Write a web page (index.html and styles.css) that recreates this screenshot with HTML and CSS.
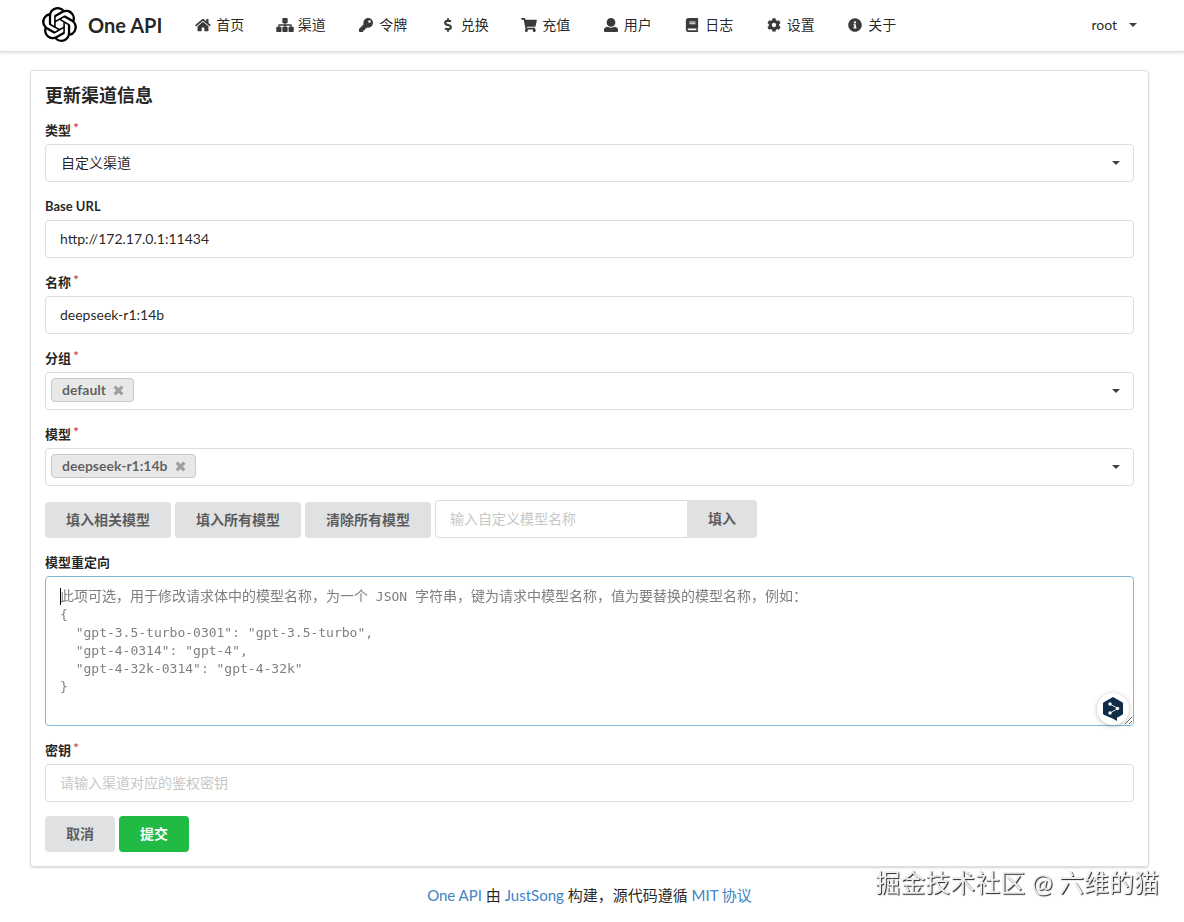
FILE: index.html
```html
<!DOCTYPE html>
<html lang="zh-CN">

<head>
    <meta charset="UTF-8">
    <meta name="viewport" content="width=device-width, initial-scale=1.0">
    <title>One API</title>
    <link rel="stylesheet" href="styles.css">
</head>

<body>
    <header class="header">
        <a class="brand" href="#">
            <svg class="logo" viewBox="0 0 24 24"><path d="M22.2819 9.8211a5.9847 5.9847 0 0 0-.5157-4.9108 6.0462 6.0462 0 0 0-6.5098-2.9A6.0651 6.0651 0 0 0 4.9807 4.1818a5.9847 5.9847 0 0 0-3.9977 2.9 6.0462 6.0462 0 0 0 .7427 7.0966 5.98 5.98 0 0 0 .511 4.9107 6.051 6.051 0 0 0 6.5146 2.9001A5.9847 5.9847 0 0 0 13.2599 24a6.0557 6.0557 0 0 0 5.7718-4.2058 5.9894 5.9894 0 0 0 3.9977-2.9001 6.0557 6.0557 0 0 0-.7475-7.0729zm-9.022 12.6081a4.4755 4.4755 0 0 1-2.8764-1.0408l.1419-.0804 4.7783-2.7582a.7948.7948 0 0 0 .3927-.6813v-6.7369l2.02 1.1686a.071.071 0 0 1 .038.052v5.5826a4.504 4.504 0 0 1-4.4945 4.4944zm-9.6607-4.1254a4.4708 4.4708 0 0 1-.5346-3.0137l.142.0852 4.783 2.7582a.7712.7712 0 0 0 .7806 0l5.8428-3.3685v2.3324a.0804.0804 0 0 1-.0332.0615L9.74 19.9502a4.4992 4.4992 0 0 1-6.1408-1.6464zM2.3408 7.8956a4.485 4.485 0 0 1 2.3655-1.9728V11.6a.7664.7664 0 0 0 .3879.6765l5.8144 3.3543-2.0201 1.1685a.0757.0757 0 0 1-.071 0l-4.8303-2.7865A4.504 4.504 0 0 1 2.3408 7.872zm16.5963 3.8558L13.1038 8.364 15.1192 7.2a.0757.0757 0 0 1 .071 0l4.8303 2.7913a4.4944 4.4944 0 0 1-.6765 8.1042v-5.6772a.79.79 0 0 0-.407-.667zm2.0107-3.0231l-.142-.0852-4.7735-2.7818a.7759.7759 0 0 0-.7854 0L9.409 9.2297V6.8974a.0662.0662 0 0 1 .0284-.0615l4.8303-2.7866a4.4992 4.4992 0 0 1 6.6802 4.66zM8.3065 12.863l-2.02-1.1638a.0804.0804 0 0 1-.038-.0567V6.0742a4.4992 4.4992 0 0 1 7.3757-3.4537l-.142.0805L8.704 5.459a.7948.7948 0 0 0-.3927.6813zm1.0976-2.3654l2.602-1.4998 2.6069 1.4998v2.9994l-2.5974 1.4997-2.6067-1.4997Z"/></svg>
            <span>One API</span>
        </a>
        <nav class="nav">
            <a href="#"><svg class="icon" viewBox="0 0 576 512"><path d="M488 312.7V456c0 13.3-10.7 24-24 24H348c-6.6 0-12-5.4-12-12V356c0-6.6-5.4-12-12-12h-72c-6.6 0-12 5.4-12 12v112c0 6.6-5.4 12-12 12H112c-13.3 0-24-10.7-24-24V312.7c0-3.6 1.6-7 4.4-9.3l188-154.8c4.4-3.6 10.8-3.6 15.3 0l188 154.8c2.7 2.3 4.3 5.7 4.3 9.3zm83.6-60.9L488 182.9V44.4c0-6.6-5.4-12-12-12h-56c-6.6 0-12 5.4-12 12V117l-89.5-73.7c-17.7-14.6-43.3-14.6-61 0L4.4 251.8c-5.1 4.2-5.8 11.8-1.6 16.9l25.5 31c4.2 5.1 11.8 5.8 16.9 1.6l235.2-193.7c4.4-3.6 10.8-3.6 15.3 0l235.2 193.7c5.1 4.2 12.7 3.5 16.9-1.6l25.5-31c4.2-5.2 3.4-12.7-1.7-16.9z"/></svg>首页</a>
            <a href="#"><svg class="icon" viewBox="0 0 640 512"><path d="M616 320h-48v-48c0-22.056-17.944-40-40-40H344v-40h48c13.255 0 24-10.745 24-24V24c0-13.255-10.745-24-24-24H248c-13.255 0-24 10.745-24 24v144c0 13.255 10.745 24 24 24h48v40H112c-22.056 0-40 17.944-40 40v48H24c-13.255 0-24 10.745-24 24v144c0 13.255 10.745 24 24 24h144c13.255 0 24-10.745 24-24V344c0-13.255-10.745-24-24-24h-48v-40h176v40h-48c-13.255 0-24 10.745-24 24v144c0 13.255 10.745 24 24 24h144c13.255 0 24-10.745 24-24V344c0-13.255-10.745-24-24-24h-48v-40h176v40h-48c-13.255 0-24 10.745-24 24v144c0 13.255 10.745 24 24 24h144c13.255 0 24-10.745 24-24V344c0-13.255-10.745-24-24-24z"/></svg>渠道</a>
            <a href="#"><svg class="icon" viewBox="0 0 512 512"><path d="M512 176.001C512 273.203 433.202 352 336 352c-11.22 0-22.19-1.062-32.827-3.069l-24.012 27.014A23.999 23.999 0 0 1 261.223 384H224v40c0 13.255-10.745 24-24 24h-40v40c0 13.255-10.745 24-24 24H24c-13.255 0-24-10.745-24-24v-78.059c0-6.365 2.529-12.47 7.029-16.971l161.802-161.802C163.108 213.814 160 195.271 160 176 160 78.798 238.797.001 335.999 0 433.488-.001 512 78.511 512 176.001zM336 128c0 26.51 21.49 48 48 48s48-21.49 48-48-21.49-48-48-48-48 21.49-48 48z"/></svg>令牌</a>
            <a href="#"><svg class="icon" viewBox="0 0 288 512"><path d="M209.2 233.4l-108-31.6C88.7 198.2 80 186.5 80 173.5c0-16.3 13.2-29.5 29.5-29.5h66.3c12.2 0 24.2 3.7 34.2 10.5 6.1 4.1 14.3 3.1 19.5-2l34.8-34c7.1-6.9 6.1-18.4-1.8-24.5C238 74.8 207.4 64.1 176 64V16c0-8.8-7.2-16-16-16h-32c-8.8 0-16 7.2-16 16v48h-2.5C45.8 64-5.4 118.7.5 183.6c4.2 46.1 39.4 83.6 83.8 96.6l102.5 30c12.5 3.7 21.2 15.3 21.2 28.3 0 16.3-13.2 29.5-29.5 29.5h-66.3C100 368 88 364.3 78 357.5c-6.1-4.1-14.3-3.1-19.5 2l-34.8 34c-7.1 6.9-6.1 18.4 1.8 24.5 24.5 19.2 55.1 29.9 86.5 30v48c0 8.8 7.2 16 16 16h32c8.8 0 16-7.2 16-16v-48.2c46.6-.9 90.3-28.6 105.7-72.7 21.5-61.6-14.6-124.8-72.5-141.7z"/></svg>兑换</a>
            <a href="#"><svg class="icon" viewBox="0 0 576 512"><path d="M528.12 301.319l47.273-208C578.806 78.301 567.391 64 551.99 64H159.208l-9.166-44.81C147.758 8.021 137.93 0 126.529 0H24C10.745 0 0 10.745 0 24v16c0 13.255 10.745 24 24 24h69.883l70.248 343.435C147.325 417.1 136 435.222 136 456c0 30.928 25.072 56 56 56s56-25.072 56-56c0-15.674-6.447-29.835-16.824-40h209.647C430.447 426.165 424 440.326 424 456c0 30.928 25.072 56 56 56s56-25.072 56-56c0-22.172-12.888-41.332-31.579-50.405l5.517-24.276c3.413-15.018-8.002-29.319-23.403-29.319H218.117l-6.545-32h293.145c11.206 0 20.92-7.754 23.403-18.681z"/></svg>充值</a>
            <a href="#"><svg class="icon" viewBox="0 0 512 512"><path d="M256 0c88.366 0 160 71.634 160 160s-71.634 160-160 160S96 248.366 96 160 167.634 0 256 0zm183.283 333.821l-71.313-17.828c-74.923 53.89-165.738 41.864-223.94 0l-71.313 17.828C29.981 344.505 0 382.903 0 426.955V464c0 26.51 21.49 48 48 48h416c26.51 0 48-21.49 48-48v-37.045c0-44.052-29.981-82.45-72.717-93.134z"/></svg>用户</a>
            <a href="#"><svg class="icon" viewBox="0 0 448 512"><path d="M448 360V24c0-13.3-10.7-24-24-24H96C43 0 0 43 0 96v320c0 53 43 96 96 96h328c13.3 0 24-10.7 24-24v-16c0-7.5-3.5-14.3-8.9-18.7-4.2-15.4-4.2-59.3 0-74.7 5.4-4.3 8.9-11.1 8.9-18.6zM128 134c0-3.3 2.7-6 6-6h212c3.3 0 6 2.7 6 6v20c0 3.3-2.7 6-6 6H134c-3.3 0-6-2.7-6-6v-20zm0 64c0-3.3 2.7-6 6-6h212c3.3 0 6 2.7 6 6v20c0 3.3-2.7 6-6 6H134c-3.3 0-6-2.7-6-6v-20zm253.4 250H96c-17.7 0-32-14.3-32-32 0-17.6 14.4-32 32-32h285.4c-1.9 17.1-1.9 46.9 0 64z"/></svg>日志</a>
            <a href="#"><svg class="icon" viewBox="0 0 512 512"><path d="M487.4 315.7l-42.6-24.6c4.3-23.2 4.3-47 0-70.2l42.6-24.6c4.9-2.8 7.1-8.6 5.5-14-11.1-35.6-30-67.8-54.7-94.6-3.8-4.1-10-5.1-14.8-2.3L380.8 110c-17.9-15.4-38.5-27.3-60.8-35.1V25.8c0-5.6-3.9-10.5-9.4-11.7-36.7-8.2-74.3-7.8-109.2 0-5.5 1.2-9.4 6.1-9.4 11.7V75c-22.2 7.9-42.8 19.8-60.8 35.1L88.7 85.5c-4.9-2.8-11-1.9-14.8 2.3-24.7 26.7-43.6 58.9-54.7 94.6-1.7 5.4.6 11.2 5.5 14L67.3 221c-4.3 23.2-4.3 47 0 70.2l-42.6 24.6c-4.9 2.8-7.1 8.6-5.5 14 11.1 35.6 30 67.8 54.7 94.6 3.8 4.1 10 5.1 14.8 2.3l42.6-24.6c17.9 15.4 38.5 27.3 60.8 35.1v49.2c0 5.6 3.9 10.5 9.4 11.7 36.7 8.2 74.3 7.8 109.2 0 5.5-1.2 9.4-6.1 9.4-11.7v-49.2c22.2-7.9 42.8-19.8 60.8-35.1l42.6 24.6c4.9 2.8 11 1.9 14.8-2.3 24.7-26.7 43.6-58.9 54.7-94.6 1.5-5.5-.7-11.3-5.6-14.1zM256 336c-44.1 0-80-35.9-80-80s35.9-80 80-80 80 35.9 80 80-35.9 80-80 80z"/></svg>设置</a>
            <a href="#"><svg class="icon" viewBox="0 0 512 512"><path d="M256 8C119.043 8 8 119.083 8 256c0 136.997 111.043 248 248 248s248-111.003 248-248C504 119.083 392.957 8 256 8zm0 110c23.196 0 42 18.804 42 42s-18.804 42-42 42-42-18.804-42-42 18.804-42 42-42zm56 254c0 6.627-5.373 12-12 12h-88c-6.627 0-12-5.373-12-12v-24c0-6.627 5.373-12 12-12h12v-64h-12c-6.627 0-12-5.373-12-12v-24c0-6.627 5.373-12 12-12h64c6.627 0 12 5.373 12 12v100h12c6.627 0 12 5.373 12 12v24z"/></svg>关于</a>
        </nav>
        <button type="button" class="account">root <svg class="caret" viewBox="0 0 8 4"><path d="M0 0h8L4 4z"/></svg></button>
    </header>

    <main class="card">
        <h1>更新渠道信息</h1>
        <form id="channelForm">
            <div class="field required">
                <label for="type">类型</label>
                <div class="dropdown">
                    <select id="type" required>
                        <option>自定义渠道</option>
                    </select>
                    <svg class="caret" viewBox="0 0 8 4"><path d="M0 0h8L4 4z"/></svg>
                </div>
            </div>

            <div class="field">
                <label for="baseUrl">Base URL</label>
                <input class="box" type="text" id="baseUrl" value="http://172.17.0.1:11434">
            </div>

            <div class="field required">
                <label for="name">名称</label>
                <input class="box" type="text" id="name" value="deepseek-r1:14b" required>
            </div>

            <div class="field required">
                <label for="groups">分组</label>
                <div class="dropdown tags">
                    <span class="tag">default
                        <button type="button" aria-label="移除 default"><svg viewBox="0 0 10 10"><path d="M1.5 1.5l7 7m0-7l-7 7"/></svg></button>
                    </span>
                    <input type="text" id="groups" role="combobox" aria-expanded="false">
                    <svg class="caret" viewBox="0 0 8 4"><path d="M0 0h8L4 4z"/></svg>
                </div>
            </div>

            <div class="field required">
                <label for="models">模型</label>
                <div class="dropdown tags">
                    <span class="tag">deepseek-r1:14b
                        <button type="button" aria-label="移除 deepseek-r1:14b"><svg viewBox="0 0 10 10"><path d="M1.5 1.5l7 7m0-7l-7 7"/></svg></button>
                    </span>
                    <input type="text" id="models" role="combobox" aria-expanded="false">
                    <svg class="caret" viewBox="0 0 8 4"><path d="M0 0h8L4 4z"/></svg>
                </div>
            </div>

            <div class="field actions">
                <button type="button" class="button">填入相关模型</button>
                <button type="button" class="button">填入所有模型</button>
                <button type="button" class="button">清除所有模型</button>
                <div class="action-input">
                    <input class="box" type="text" aria-label="自定义模型名称" placeholder="输入自定义模型名称">
                    <button type="button" class="button">填入</button>
                </div>
            </div>

            <div class="field">
                <label for="mapping">模型重定向</label>
                <div class="mapping">
                    <textarea id="mapping" placeholder=" " aria-describedby="mappingHint" autofocus></textarea>
                    <!-- The hint mixes two text sizes, so it is not a plain placeholder -->
                    <div class="hint" id="mappingHint">
                        <p>此项可选，用于修改请求体中的模型名称，为一个<code> JSON </code>字符串，键为请求中模型名称，值为要替换的模型名称，例如：</p>
                        <pre>{
  "gpt-3.5-turbo-0301": "gpt-3.5-turbo",
  "gpt-4-0314": "gpt-4",
  "gpt-4-32k-0314": "gpt-4-32k"
}</pre>
                    </div>
                    <button type="button" class="translate" aria-label="翻译">
                        <svg viewBox="0 0 20 24">
                            <path fill="#0f2b46" d="M10 0l9.2 5.2q.8.5.8 1.4v9.8q0 .9-.8 1.4L14 20.8V24l-4.500-2.400L.8 17.800Q0 17.300 0 16.400V6.600q0-.9.8-1.400z"/>
                            <path fill="none" stroke="#cfe3f0" d="M7 7l8 4.500-8 4.500"/>
                            <circle cx="7" cy="7" r="1.700" fill="#fff"/>
                            <circle cx="14.500" cy="11.500" r="1.700" fill="#fff"/>
                            <circle cx="7" cy="16" r="1.700" fill="#fff"/>
                        </svg>
                    </button>
                </div>
            </div>

            <div class="field required">
                <label for="key">密钥</label>
                <input class="box" type="text" id="key" placeholder="请输入渠道对应的鉴权密钥" required>
            </div>

            <div class="actions">
                <button type="button" class="button">取消</button>
                <button type="submit" class="button positive">提交</button>
            </div>
        </form>
    </main>

    <footer class="footer">
        <a href="#">One API</a> 由 <a href="#">JustSong</a> 构建，源代码遵循 <a href="#">MIT 协议</a>
    </footer>

    <div class="watermark">掘金技术社区 @ 六维的猫</div>
</body>

</html>
```

FILE: styles.css
```css
* {
    box-sizing: border-box;
}

body {
    margin: 0;
    background-color: #fff;
    color: rgba(0, 0, 0, 0.87);
    font-family: Lato, "Noto Sans CJK SC", sans-serif;
    font-size: 14px;
    line-height: 20px;
}

a {
    color: #4183c4;
    text-decoration: none;
}

button,
input,
select,
textarea {
    font-family: inherit;
    font-size: 14px;
    color: inherit;
    margin: 0;
    outline: none;
}

button {
    cursor: pointer;
}

/* Top bar */
.header {
    display: flex;
    align-items: center;
    height: 52px;
    padding: 0 47px 2px 42px;
    border-bottom: 1px solid #dededf;
    box-shadow: 0 1px 2px rgba(34, 36, 38, 0.15);
}

.brand {
    display: flex;
    align-items: center;
    gap: 11px;
    margin-right: 32px;
    color: rgba(0, 0, 0, 0.87);
    font-size: 20px;
    font-weight: bold;
}

.logo {
    width: 35px;
    height: 35px;
    fill: #000;
}

.nav {
    display: flex;
    flex: 0 1 702px;
    justify-content: space-between;
}

.nav a {
    display: flex;
    align-items: center;
    gap: 4px;
    color: rgba(0, 0, 0, 0.87);
}

.icon {
    width: 18px;
    height: 14px;
    fill: #3a3a3a;
}

.account {
    display: flex;
    align-items: center;
    gap: 12px;
    margin-left: auto;
    padding: 0;
    border: none;
    background: none;
}

.caret {
    width: 8px;
    height: 4px;
    fill: #404040;
}

/* Form card */
.card {
    margin: 18px 35px 0 30px;
    padding: 14px;
    border: 1px solid #dededf;
    border-radius: 4px;
    box-shadow: 0 1px 2px #d4d4d5;
}

h1 {
    margin: 0 0 14px;
    font-size: 18px;
    line-height: 21px;
}

.field {
    margin-bottom: 14px;
}

.field > label {
    display: block;
    margin-bottom: 4px;
    font-size: 13px;
    font-weight: bold;
}

.required > label::after {
    content: "*";
    margin-left: 2px;
    color: #db2828;
    font-size: 14px;
    font-weight: normal;
    vertical-align: top;
    line-height: 16px;
}

.box,
.dropdown {
    width: 100%;
    height: 38px;
    border: 1px solid #dededf;
    border-radius: 4px;
    background-color: #fff;
}

.box {
    display: block;
    padding: 0 14px 2px;
}

.box::placeholder {
    color: #c7c7c7;
}

.dropdown {
    display: flex;
    align-items: center;
    padding-right: 13px;
}

.dropdown select {
    flex: 1;
    height: 36px;
    padding: 0 15px 2px;
    border: none;
    background: none;
    appearance: none;
}

.tags {
    padding-left: 5px;
}

.tags input {
    flex: 1;
    min-width: 0;
    border: none;
    background: none;
}

.tag {
    display: flex;
    align-items: center;
    gap: 7px;
    height: 24px;
    margin-bottom: 2px;
    padding: 0 9px 0 10px;
    border: 1px solid #c6c7c7;
    border-radius: 4px;
    background-color: #e8e8e8;
    color: rgba(0, 0, 0, 0.6);
    font-weight: bold;
}

.tag button {
    display: flex;
    padding: 0;
    border: none;
    background: none;
}

.tag svg {
    width: 11px;
    height: 11px;
    stroke: #a0a0a0;
    stroke-width: 3;
}

.actions {
    display: flex;
    align-items: flex-end;
    gap: 4px;
}

.button {
    height: 36px;
    padding: 0 21px 2px;
    border: none;
    border-radius: 4px;
    background-color: #e0e1e2;
    color: rgba(0, 0, 0, 0.6);
    font-weight: bold;
}

.positive {
    background-color: #21ba45;
    color: #fff;
}

.action-input {
    display: flex;
    width: 322px;
}

.action-input .box {
    flex: 1;
    min-width: 0;
    border-right: none;
    border-radius: 4px 0 0 4px;
}

.action-input .button {
    height: 38px;
    border-radius: 0 4px 4px 0;
}

/* Model mapping editor */
.mapping {
    position: relative;
}

textarea {
    display: block;
    width: 100%;
    height: 150px;
    padding: 10px 14px;
    border: 1px solid #dededf;
    border-radius: 4px;
    font-family: "DejaVu Sans Mono", "Noto Sans CJK SC", monospace;
    line-height: 18px;
    resize: vertical;
}

textarea:focus {
    border-color: #85b7d9;
}

.hint {
    display: none;
    position: absolute;
    top: 11px;
    left: 15px;
    right: 15px;
    color: #7f7f7f;
    line-height: 18px;
    pointer-events: none;
}

textarea:placeholder-shown + .hint {
    display: block;
}

/* Text cursor in front of the hint */
textarea:focus + .hint::before {
    content: "";
    position: absolute;
    top: 1px;
    left: 0;
    width: 1px;
    height: 17px;
    background-color: #000;
}

.hint p,
.hint pre {
    margin: 0;
}

.hint pre,
.hint code {
    font-family: "DejaVu Sans Mono", monospace;
    font-size: 13px;
    white-space: pre;
}

.translate {
    position: absolute;
    right: 5px;
    bottom: 1px;
    display: flex;
    align-items: center;
    justify-content: center;
    width: 32px;
    height: 32px;
    padding: 0;
    border: none;
    border-radius: 50%;
    background-color: #fff;
    box-shadow: 0 1px 5px rgba(0, 0, 0, 0.25);
}

.translate svg {
    width: 20px;
    height: 24px;
}

.footer {
    margin: 18px 35px 0 30px;
    font-size: 15px;
    text-align: center;
}

.watermark {
    position: fixed;
    right: 25px;
    bottom: 22px;
    color: #eee;
    font-size: 25px;
    line-height: 36px;
    text-shadow: 1px 1px 1px #222;
}
```
